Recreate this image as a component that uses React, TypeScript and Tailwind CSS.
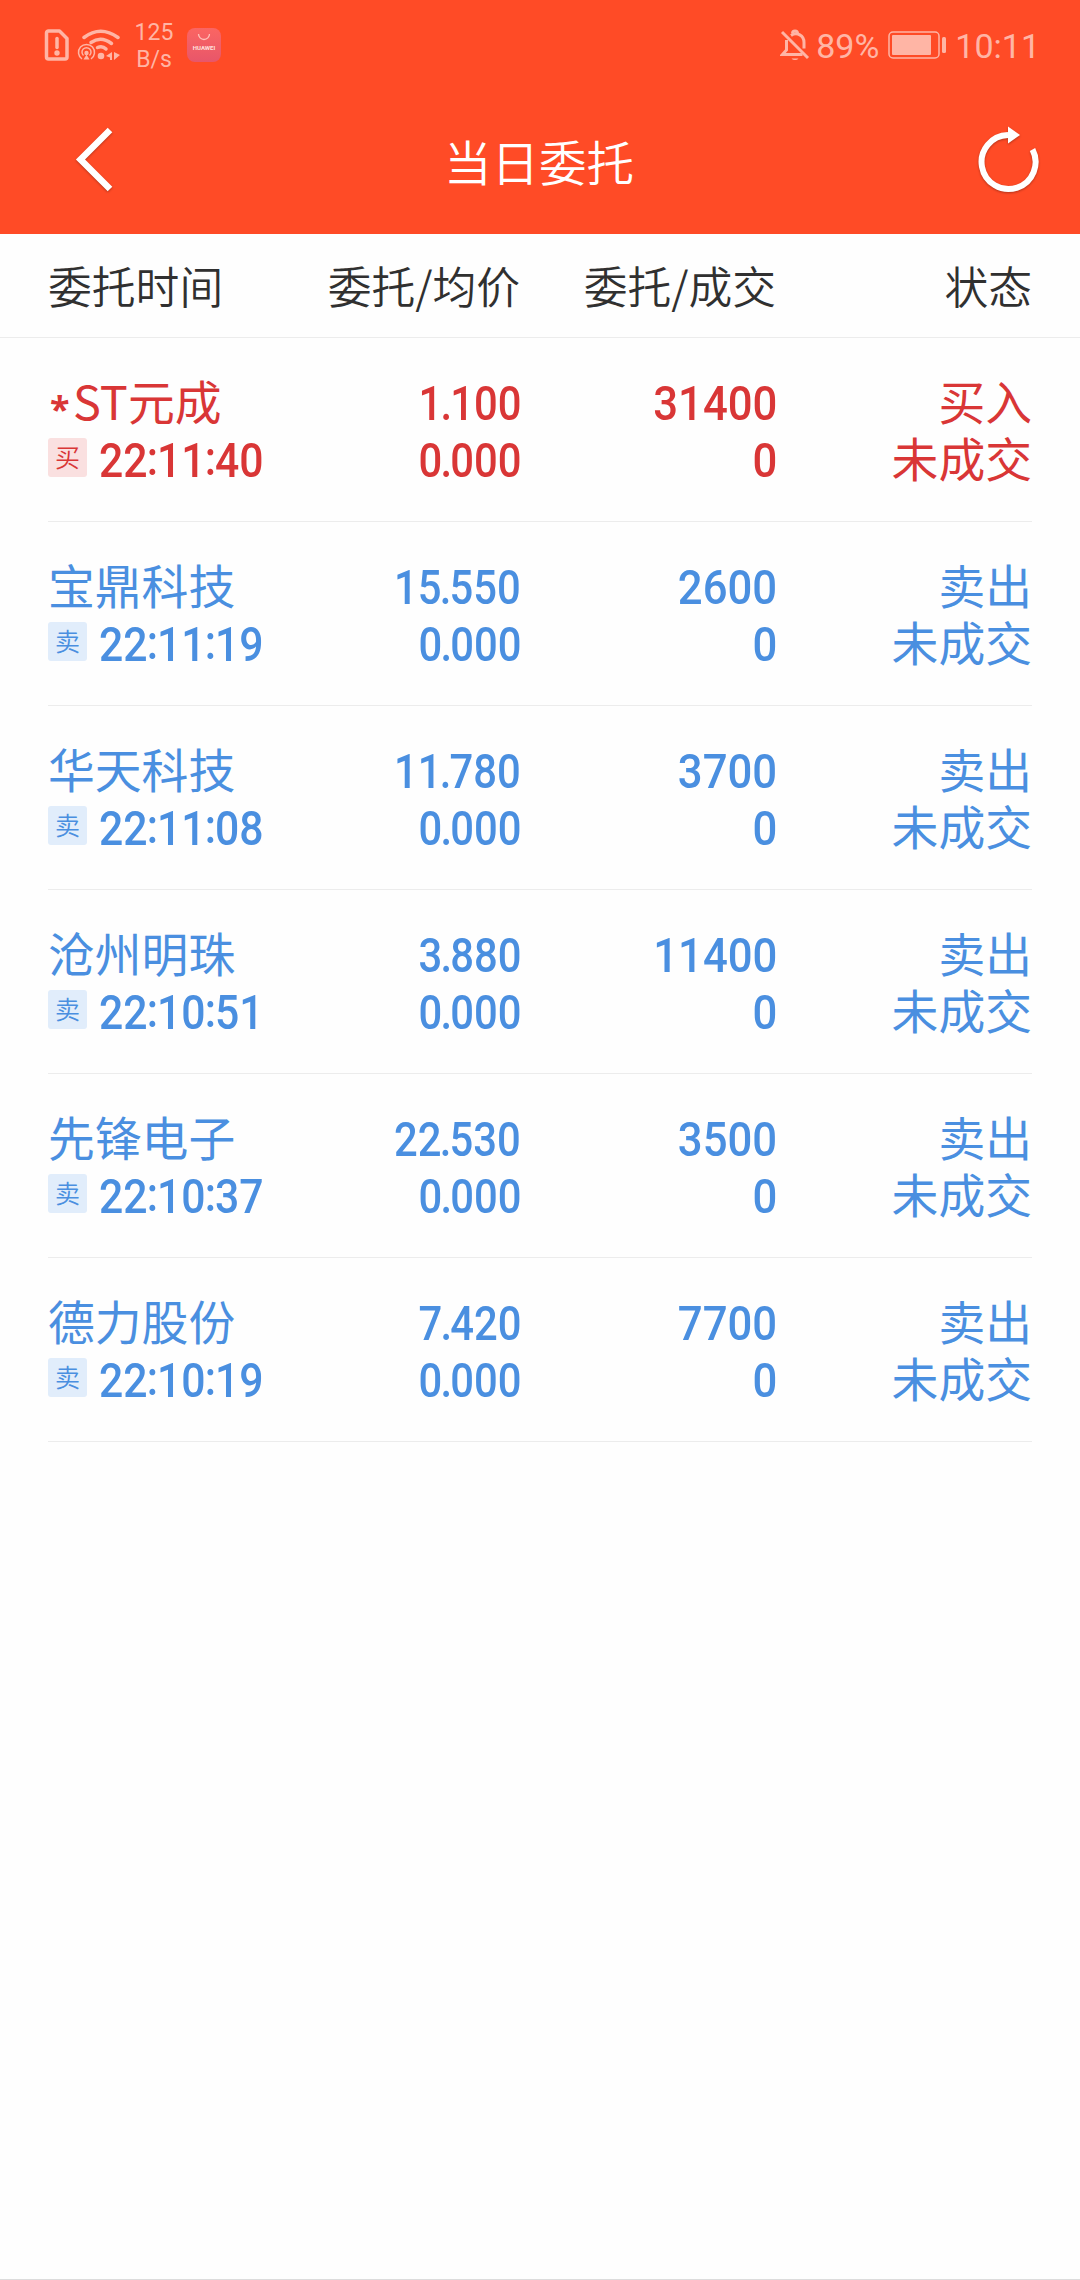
import React from 'react';

interface Order {
  name: string;
  time: string;
  side: 'buy' | 'sell';
  price: string;
  amount: string;
}

const orders: Order[] = [
  { name: '*ST元成', time: '22:11:40', side: 'buy', price: '1.100', amount: '31400' },
  { name: '宝鼎科技', time: '22:11:19', side: 'sell', price: '15.550', amount: '2600' },
  { name: '华天科技', time: '22:11:08', side: 'sell', price: '11.780', amount: '3700' },
  { name: '沧州明珠', time: '22:10:51', side: 'sell', price: '3.880', amount: '11400' },
  { name: '先锋电子', time: '22:10:37', side: 'sell', price: '22.530', amount: '3500' },
  { name: '德力股份', time: '22:10:19', side: 'sell', price: '7.420', amount: '7700' },
];

const digitStyles = {
  time: 'origin-left scale-x-[0.89]',
  price: '-mr-px origin-right scale-x-[0.87]',
  amount: '-mr-px origin-right scale-x-[0.91]',
};

// Condensed digits, the decimal point is pulled in tighter than the numbers
function Digits({ value, kind }: { value: string; kind: 'time' | 'price' | 'amount' }) {
  return (
    <span
      className={`inline-block whitespace-nowrap font-[Roboto,sans-serif] text-[48px] font-medium leading-[57px] ${digitStyles[kind]}`}
    >
      {value.split(/([.:])/).map((part, i) => (
        <span key={i} className={part === '.' ? '-mx-[2px]' : part === ':' ? 'relative -top-[2px] -mx-px' : ''}>
          {part}
        </span>
      ))}
    </span>
  );
}

function StatusBar() {
  return (
    <div className="flex h-[90px] items-center justify-between pl-[44px] pr-[40px] text-[#ffb5a5]">
      <div className="flex items-center">
        <svg className="h-[34px] w-[26px]" viewBox="0 0 26 34" fill="none" stroke="currentColor" strokeWidth="3.500">
          <path d="M4.500 3H15.500L23 10.500V29a2 2 0 0 1-2 2H4.500a2 2 0 0 1-2-2V5a2 2 0 0 1 2-2Z" strokeLinejoin="round" />
          <path d="M13 10.500v9" strokeLinecap="round" />
          <circle cx="13" cy="25" r="2.700" fill="currentColor" stroke="none" />
        </svg>
        <svg className="ml-[7px] h-[34px] w-[44px]" viewBox="0 0 44 34" fill="none" stroke="currentColor">
          <path d="M7 9.500q16.500-12.500 34 0" strokeWidth="3.500" strokeLinecap="round" />
          <path d="M14 14.500q10-7 20.500 1" strokeWidth="3.500" strokeLinecap="round" />
          <path d="M20.500 19.500q5-2 8.500 1.500" strokeWidth="3.500" strokeLinecap="round" />
          <path d="M5 31a8 8 0 1 1 9 0" strokeWidth="1.500" />
          <path d="M6.500 27.500a4.500 4.500 0 1 1 6 0" strokeWidth="1.500" />
          <path d="M6.500 31.500l3-5 3 5Z" fill="currentColor" stroke="none" />
          <circle cx="9.500" cy="25" r="2.200" fill="currentColor" stroke="none" />
          <circle cx="24" cy="28" r="3.300" fill="currentColor" stroke="none" />
          <path d="M35 24v8h-2v-2.500l-4-1.500Z M37 24v8l6-5Z" fill="currentColor" stroke="none" />
        </svg>
        <div className="ml-[12px] mt-[2px] w-[42px] text-center font-[Roboto,sans-serif] text-[23px] leading-[27px]">
          <div>125</div>
          <div>B/s</div>
        </div>
        <div className="ml-[12px] flex h-[34px] w-[34px] flex-col items-center rounded-[8px] bg-linear-to-b from-[#fb6562] to-[#e8566a]">
          <svg className="mt-[5px] h-[8px] w-[14px]" viewBox="0 0 14 8" fill="none" stroke="#ffc0b8" strokeWidth="1.300">
            <path d="M1.500 1a5.500 5.500 0 0 0 11 0" />
          </svg>
          <span className="mt-[3px] font-[Roboto,sans-serif] text-[6px] font-bold leading-[7px] text-[#ffe0dc]">HUAWEI</span>
        </div>
      </div>
      <div className="flex items-center font-[Roboto,sans-serif] text-[34px] leading-[40px]">
        <svg className="h-[34px] w-[30px]" viewBox="0 0 30 34" fill="none" stroke="currentColor" strokeWidth="3">
          <path d="M2 4l26 26" />
          <path d="M6.500 12v10l-4 4.500h20" />
          <path d="M11 7.500c6-4 13 0 13 7v6" />
          <path d="M12.500 5.500a2.500 2.500 0 0 1 5 0" />
          <path d="M11.500 30.500a4 3 0 0 0 7 0Z" fill="currentColor" stroke="none" />
        </svg>
        <span className="ml-[6px] mt-[2px]">89%</span>
        <svg className="ml-[9px] h-[28px] w-[59px]" viewBox="0 0 59 28" fill="none">
          <rect x="1" y="1" width="50" height="26" rx="4" stroke="currentColor" strokeWidth="1.500" />
          <rect x="4" y="4" width="39" height="20" rx="1" fill="currentColor" />
          <rect x="54" y="6" width="4" height="16" rx="1.500" fill="currentColor" />
        </svg>
        <span className="ml-[8px] mt-[2px]">10:11</span>
      </div>
    </div>
  );
}

function TitleBar() {
  return (
    <div className="flex h-[144px] items-center justify-between pl-[70px] pr-[36px]">
      <svg className="h-[72px] w-[48px] drop-shadow-[0_1px_1px_rgba(0,0,0,0.3)]" viewBox="0 0 48 72" fill="none" stroke="#fff" strokeWidth="6.500">
        <path d="M40 4L10.500 33.500L40 63" />
      </svg>
      <h1 className="-mt-[2px] mr-[12px] text-[47.500px] font-[350] leading-[60px] text-white">当日委托</h1>
      <svg className="h-[72px] w-[72px] drop-shadow-[0_1px_1px_rgba(0,0,0,0.3)]" viewBox="0 0 72 72" fill="none">
        <path d="M36 9a27 27 0 1 0 24.500 14.500" stroke="#fff" strokeWidth="6" />
        <path d="M36 0.500l12 8.500-12 8.500Z" fill="#fff" />
      </svg>
    </div>
  );
}

function StockName({ name }: { name: string }) {
  if (!name.startsWith('*')) {
    return <>{name}</>;
  }
  return (
    <>
      <span className="relative top-[2px] inline-block w-[25px] pl-[2px] font-['Noto_Sans',sans-serif] text-[36px] font-bold leading-none">*</span>
      {name.slice(1)}
    </>
  );
}

function OrderRow({ order }: { order: Order }) {
  const buy = order.side === 'buy';
  return (
    <div
      className={`mx-[48px] grid h-[184px] grid-cols-[216px_256px_256px_256px] border-b border-[#ececec] pt-[33px] text-[46.800px] leading-[57px] ${
        buy ? 'text-[#d93636]' : 'text-[#4a8fe0]'
      }`}
    >
      <div className="whitespace-nowrap">
        <div className="h-[57px]">
          <StockName name={order.name} />
        </div>
        <div className="flex h-[57px] items-center">
          <span
            className={`mt-[2px] flex h-[39px] w-[39px] shrink-0 items-center justify-center rounded-[3px] pb-[3px] text-[25px] font-[350] leading-none ${
              buy ? 'bg-[#fae0e0]' : 'bg-[#e1edfb]'
            }`}
          >
            {buy ? '买' : '卖'}
          </span>
          <span className="ml-[12px] h-[57px]">
            <Digits value={order.time} kind="time" />
          </span>
        </div>
      </div>
      <div className="text-right">
        <div className="h-[57px]"><Digits value={order.price} kind="price" /></div>
        <div className="h-[57px]"><Digits value="0.000" kind="price" /></div>
      </div>
      <div className="text-right">
        <div className="h-[57px]"><Digits value={order.amount} kind="amount" /></div>
        <div className="h-[57px]"><Digits value="0" kind="amount" /></div>
      </div>
      <div className="text-right">
        <div className="h-[57px]">{buy ? '买入' : '卖出'}</div>
        <div className="h-[57px]">未成交</div>
      </div>
    </div>
  );
}

export default function App() {
  return (
    <div className="flex h-[2280px] w-[1080px] flex-col overflow-hidden border-b border-[#dcdcdc] bg-[#fefefe] font-['Noto_Sans_CJK_SC',sans-serif]">
      <header className="h-[234px] bg-[#ff4b26]">
        <StatusBar />
        <TitleBar />
      </header>
      <div className="grid h-[104px] grid-cols-[216px_256px_256px_256px] items-center border-b border-[#ececec] px-[48px] text-[43.800px] font-[350] text-[#303030]">
        <div>委托时间</div>
        <div className="text-right">委托/均价</div>
        <div className="text-right">委托/成交</div>
        <div className="text-right">状态</div>
      </div>
      <main>
        {orders.map((order) => (
          <OrderRow key={order.time} order={order} />
        ))}
      </main>
    </div>
  );
}
